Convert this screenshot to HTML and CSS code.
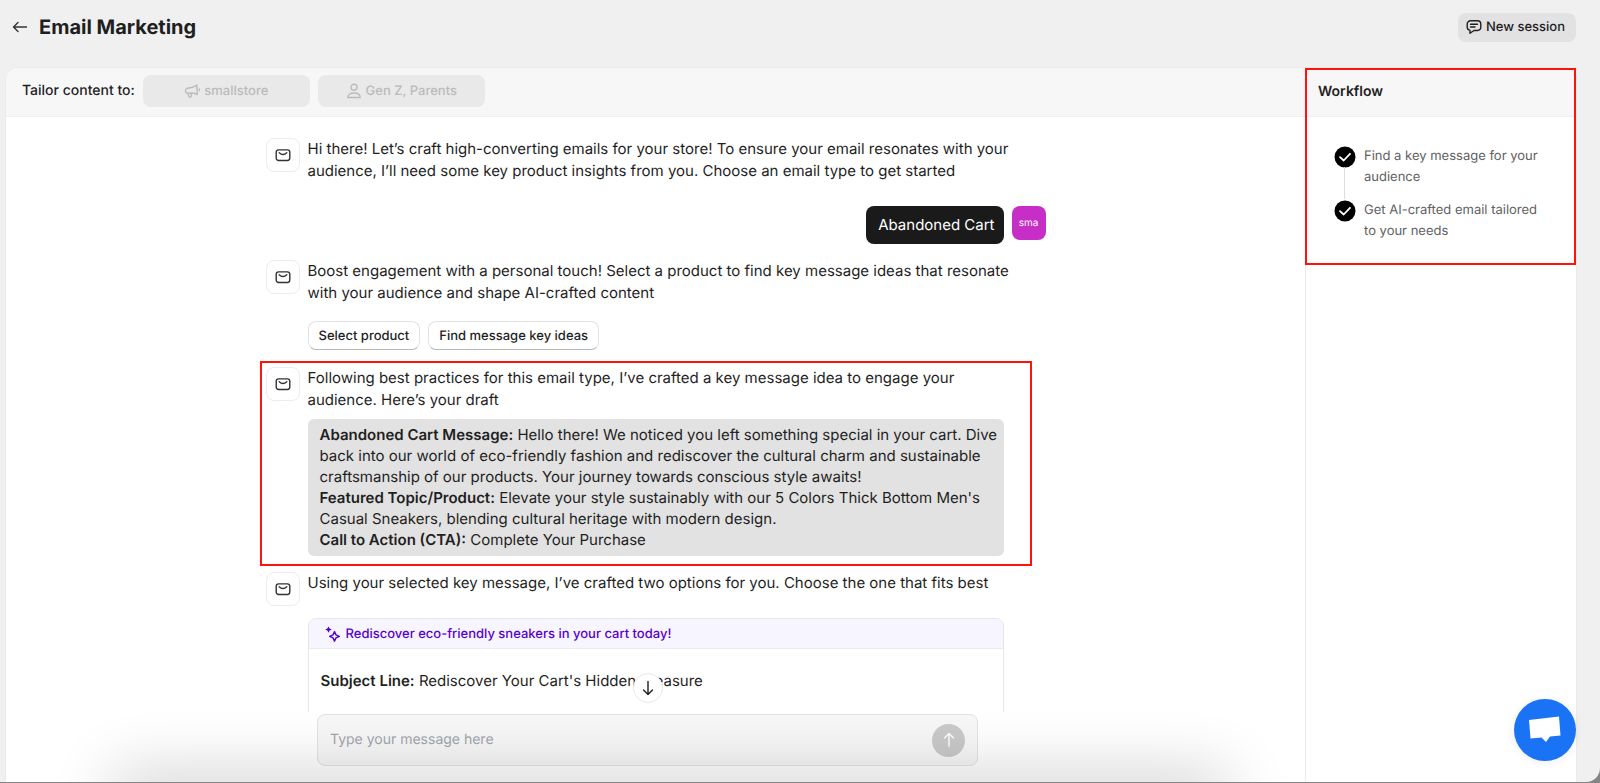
FILE: index.html
```html
<!DOCTYPE html>
<html lang="en">
<head>
<meta charset="utf-8">
<title>Email Marketing</title>
<link rel="stylesheet" href="styles.css">
</head>
<body>
<svg class="defs" aria-hidden="true">
  <symbol id="mail" viewBox="0 0 16 16"><rect x="1.2" y="2.9" width="13.6" height="10.6" rx="2.4"/><path d="M4.2 5.8c2.300 2.100 5.300 2.100 7.600 0"/></symbol>
</svg>
<div class="app">
  <header class="topbar">
    <button class="back" aria-label="Back"><svg viewBox="0 0 16 16"><path d="M14.500 8H1.800M6 3.500 1.500 8 6 12.500"/></svg></button>
    <h1 class="title">Email Marketing</h1>
    <button class="new-session"><svg viewBox="0 0 16 16"><path d="M4.600 1.700h6.800a3.400 3.400 0 0 1 3.400 3.400v3a3.400 3.400 0 0 1-3.400 3.400H8l-4 2.800v-2.900a3.400 3.400 0 0 1-2.800-3.300v-3a3.400 3.400 0 0 1 3.400-3.400zM4.500 5.200h7M4.500 8h4.500"/></svg>New session</button>
  </header>

  <div class="panel">
    <main class="main">
      <div class="tailor">
        <span class="tailor-label">Tailor content to:</span>
        <button class="chip" disabled><svg viewBox="0 0 16 16"><path d="M12.800 2 8.500 4.300 3.300 5.300a2.500 2.500 0 0 0 .7 4.900l5-.3 4.300 1.600zM4 10.300l.8 3a1.400 1.400 0 0 0 2.700-.6L7.200 10M15.200 6l.2 1.600"/></svg>smallstore</button>
        <button class="chip" disabled><svg viewBox="0 0 16 16"><circle cx="8" cy="4.300" r="3"/><path d="M1.800 14.500c0-2.800 2.600-4.500 6.200-4.500s6.200 1.700 6.200 4.500z"/></svg>Gen Z, Parents</button>
      </div>

      <div class="chat">
        <div class="thread">
          <div class="message">
            <span class="bot"><svg><use href="#mail"/></svg></span>
            <div class="content"><p class="text">Hi there! Let’s craft high-converting emails for your store! To ensure your email resonates with your audience, I’ll need some key product insights from you. Choose an email type to get started</p></div>
          </div>

          <div class="reply"><p class="bubble">Abandoned Cart</p><span class="avatar">sma</span></div>

          <div class="message">
            <span class="bot"><svg><use href="#mail"/></svg></span>
            <div class="content">
              <p class="text">Boost engagement with a personal touch! Select a product to find key message ideas that resonate with your audience and shape AI-crafted content</p>
              <div class="actions"><button class="action">Select product</button><button class="action">Find message key ideas</button></div>
            </div>
          </div>

          <div class="message marked">
            <span class="bot"><svg><use href="#mail"/></svg></span>
            <div class="content">
              <p class="text">Following best practices for this email type, I’ve crafted a key message idea to engage your audience. Here’s your draft</p>
              <div class="draft">
                <p><b>Abandoned Cart Message:</b> Hello there! We noticed you left something special in your cart. Dive back into our world of eco-friendly fashion and rediscover the cultural charm and sustainable craftsmanship of our products. Your journey towards conscious style awaits!</p>
                <p><b>Featured Topic/Product:</b> Elevate your style sustainably with our 5 Colors Thick Bottom Men's Casual Sneakers, blending cultural heritage with modern design.</p>
                <p><b>Call to Action (CTA):</b> Complete Your Purchase</p>
              </div>
            </div>
          </div>

          <div class="message last">
            <span class="bot"><svg><use href="#mail"/></svg></span>
            <div class="content">
              <p class="text">Using your selected key message, I’ve crafted two options for you. Choose the one that fits best</p>
              <section class="option">
                <h2 class="option-title"><svg viewBox="0 0 16 16"><path class="solid" d="M3.500 .6 4.600 2.600 6.800 3.600 4.600 4.600 3.500 6.800 2.400 4.600 .2 3.600 2.400 2.600z"/><path d="M9.500 5.600 11 8.900 14.300 10.400 11 11.900 9.500 15.200 8 11.900 4.700 10.400 8 8.900z"/></svg>Rediscover eco-friendly sneakers in your cart today!</h2>
                <p class="option-body"><b>Subject Line:</b> Rediscover Your Cart's Hidden Treasure</p>
              </section>
            </div>
          </div>
        </div>
      </div>

      <form class="composer-area">
        <button type="button" class="scroll-down" aria-label="Scroll to latest"><svg viewBox="0 0 16 16"><path d="M8 1.500v13M3.500 10 8 14.500 12.500 10"/></svg></button>
        <div class="composer">
          <input class="field" type="text" aria-label="Message" placeholder="Type your message here">
          <button type="button" class="send" aria-label="Send"><svg viewBox="0 0 16 16"><path d="M8 14.500v-13M3.500 6 8 1.500 12.500 6"/></svg></button>
        </div>
      </form>
    </main>

    <aside class="side">
      <div class="workflow">
        <h2 class="side-title">Workflow</h2>
        <ol class="steps">
          <li class="step"><svg class="check" viewBox="0 0 22 22"><circle cx="11" cy="11" r="10.500"/><path d="M6 11.200 9.700 14.500 16 7.800"/></svg><span>Find a key message for your audience</span></li>
          <li class="step"><svg class="check" viewBox="0 0 22 22"><circle cx="11" cy="11" r="10.500"/><path d="M6 11.200 9.700 14.500 16 7.800"/></svg><span>Get AI-crafted email tailored to your needs</span></li>
        </ol>
      </div>
    </aside>
  </div>

  <div class="shade"></div>
  <button class="help" aria-label="Open chat"><svg viewBox="0 0 32 28"><path d="M0 4 30 .5 31.500 19.500 21 20.500 17 26 12.500 21.500 1.500 22.500z"/></svg></button>
</div>
</body>
</html>
```
FILE: styles.css
```css
* { box-sizing: border-box; }
body { margin: 0; background: #858585; color: #1f1f1f; font-family: Inter, "Liberation Sans", sans-serif; font-size: 15px; line-height: 22px; text-rendering: geometricPrecision; }
h1, h2, p, ol { margin: 0; padding: 0; }
b { font-weight: 600; }
button { font: inherit; color: inherit; border: 0; padding: 0; cursor: pointer; text-rendering: inherit; }
svg { fill: none; stroke: currentColor; stroke-width: 1.4; stroke-linecap: round; stroke-linejoin: round; width: 16px; height: 16px; flex: none; }
.defs { position: absolute; width: 0; height: 0; }

.app { position: relative; height: calc(100vh - 1px); display: flex; flex-direction: column; overflow: hidden; background: #f0f0f0; border-bottom-right-radius: 14px; }
.topbar { flex: none; height: 68px; padding: 0 24px 14px 12px; display: flex; align-items: center; gap: 11px; }
.back { display: flex; background: none; color: #333; }
.title { font-size: 20px; line-height: 28px; font-weight: 700; margin-right: auto; }
.new-session { height: 29px; padding: 0 11px 0 8px; border-radius: 8px; background: #e2e2e2; display: flex; align-items: center; gap: 4px; font-size: 13px; font-weight: 500; }

.panel { flex: 1; min-height: 0; margin: 0 24px 0 6px; display: flex; background: #fff; border-radius: 12px 0 0 0; box-shadow: 0 0 0 1px #ebebeb; overflow: hidden; }
.main { flex: 1; min-width: 0; display: flex; flex-direction: column; }
.tailor { flex: none; height: 49px; padding: 0 16px 2px; display: flex; align-items: center; gap: 8px; background: #f7f7f7; border-bottom: 1px solid #efefef; }
.tailor-label { font-size: 14px; font-weight: 500; }
.chip { width: 167px; height: 32px; border-radius: 8px; background: #e9e9e9; color: #bbb; display: flex; align-items: center; justify-content: center; gap: 4px; font-size: 13px; font-weight: 500; cursor: default; }

.chat { flex: 1; min-height: 0; overflow: hidden; padding-top: 21px; }
.thread { width: 780px; max-width: 100%; margin: 0 auto; }
.message { display: flex; gap: 8px; padding-right: 42px; position: relative; }
.bot { width: 34px; height: 34px; flex: none; border: 1px solid #ececec; border-radius: 8px; display: flex; align-items: center; justify-content: center; color: #333; }
.content { flex: 1; min-width: 0; }
.text { margin-right: -8px; }
.reply { display: flex; justify-content: flex-end; gap: 8px; margin: 24px 0 16px; }
.bubble { padding: 8px 9px 8px 12px; border-radius: 8px; background: #1a1a1a; color: #fff; }
.avatar { width: 34px; height: 34px; border-radius: 8px; background: #c72ec7; color: #fff; font-size: 10px; display: flex; align-items: center; justify-content: center; }
.actions { display: flex; gap: 8px; margin-top: 17px; }
.action { height: 29px; padding: 0 10px; border-radius: 8px; background: #fff; border: 1px solid #e3e3e3; border-bottom-color: #b8b8b8; font-size: 13px; font-weight: 500; }
.marked { margin-top: 17px; }
.marked::after { content: ""; position: absolute; inset: -6px 14px -10px -6px; border: 2px solid #fb1408; pointer-events: none; }
.draft { margin-top: 8px; padding: 5px 4px 6px 12px; border-radius: 6px; background: #e2e2e2; line-height: 21px; }
.last { margin-top: 16px; }
.option { margin-top: 24px; border: 1px solid #e6e6e6; border-radius: 8px; overflow: hidden; height: 300px; }
.option-title { height: 30px; padding: 0 16px; display: flex; align-items: center; gap: 5px; background: #f7f5ff; border-bottom: 1px solid #ececf0; color: #5700d1; font-size: 13px; font-weight: 500; }
.option-title .solid { fill: currentColor; stroke: none; }
.option-body { padding: 21px 12px; }

.composer-area { position: relative; flex: none; padding: 2px 16px 16px 0; background: #fff; }
.composer { width: 661px; max-width: 100%; height: 52px; margin: 0 auto; padding: 0 12px; display: flex; align-items: center; border: 1px solid #e3e3e3; border-radius: 8px; background: #f7f7f7; }
.field { flex: 1; min-width: 0; border: 0; padding: 0; outline: 0; background: none; font: inherit; font-size: 14px; text-rendering: inherit; }
.field::placeholder { color: #a1a5ae; }
.send { width: 33px; height: 33px; border-radius: 50%; background: #c9c9c9; color: #fff; display: flex; align-items: center; justify-content: center; }
.scroll-down { position: absolute; left: calc(50% - 23px); top: -39px; width: 30px; height: 30px; border-radius: 50%; background: #fff; border: 1px solid #e8e8e8; display: flex; align-items: center; justify-content: center; }

.side { width: 271px; flex: none; border-left: 1px solid #ececec; }
.workflow { outline: 2px solid #fb1408; outline-offset: -2px; margin-left: -1px; height: 197px; }
.side-title { height: 49px; padding: 0 13px; display: flex; align-items: center; background: #f7f7f7; border-bottom: 1px solid #efefef; font-size: 14px; font-weight: 600; }
.steps { list-style: none; padding: 28px 24px 0 29px; font-size: 13px; line-height: 21px; color: #616161; }
.step { position: relative; display: flex; gap: 8px; padding: 1px 28px 11px 0; margin-right: -16px; }
.step:first-child::before { content: ""; position: absolute; left: 10px; top: 22px; bottom: 0; width: 1px; background: #ddd; }
.check { width: 22px; height: 22px; color: #fff; stroke-width: 1.8; }
.check circle { fill: #000; stroke: none; }

.shade { position: absolute; left: 120px; right: 380px; bottom: -30px; height: 30px; box-shadow: 0 0 64px 8px rgba(0, 0, 0, 0.2); pointer-events: none; }
.help { position: absolute; right: 24px; bottom: 21px; width: 62px; height: 62px; border-radius: 50%; background: #1a72f5; display: flex; align-items: center; justify-content: center; box-shadow: 0 1px 8px rgba(0, 0, 0, 0.08); }
.help svg { width: 32px; height: 28px; fill: #fff; stroke: none; }
```
